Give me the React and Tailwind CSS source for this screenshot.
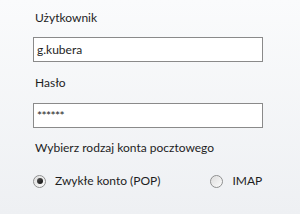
import React from 'react';

const Radio = ({ checked, label }) => (
  <label className="flex items-center">
    <span className="w-[13px] h-[13px] rounded-full border border-[#8e8f8f] bg-gradient-to-br from-[#dcdcdc] to-[#fbfbfb] flex items-center justify-center shadow-[inset_0_0_1px_#fff]">
      {checked && (
        <span className="w-[6px] h-[6px] rounded-full bg-gradient-to-br from-[#555] to-[#111]" />
      )}
    </span>
    <span className="ml-[9px]">{label}</span>
  </label>
);

export default function App() {
  return (
    <div
      className="w-[300px] h-[214px] bg-gradient-to-b from-[#fafbfc] to-[#eef0f3] text-[12px] leading-[16px] text-[#1e1e1e] pl-[33px] pt-[10px]"
      style={{ fontFamily: 'Lato, "Noto Sans", sans-serif' }}
    >
      <div className="pl-[2px]">Użytkownik</div>
      <div className="mt-[11px] w-[230px] h-[25px] border border-[#8a8a8a] bg-white pl-[3px] flex items-center">
        g.kubera
      </div>
      <div className="pl-[2px] mt-[13px]">Hasło</div>
      <div className="mt-[12px] w-[230px] h-[25px] border border-[#8a8a8a] bg-white pl-[3px] flex items-center text-[12px] tracking-[-0.6px]">
        ******
      </div>
      <div className="pl-[2px] mt-[12px]">Wybierz rodzaj konta pocztowego</div>
      <div className="mt-[17px] flex">
        <Radio checked label="Zwykłe konto (POP)" />
        <div className="ml-[50px]">
          <Radio label="IMAP" />
        </div>
      </div>
    </div>
  );
}
